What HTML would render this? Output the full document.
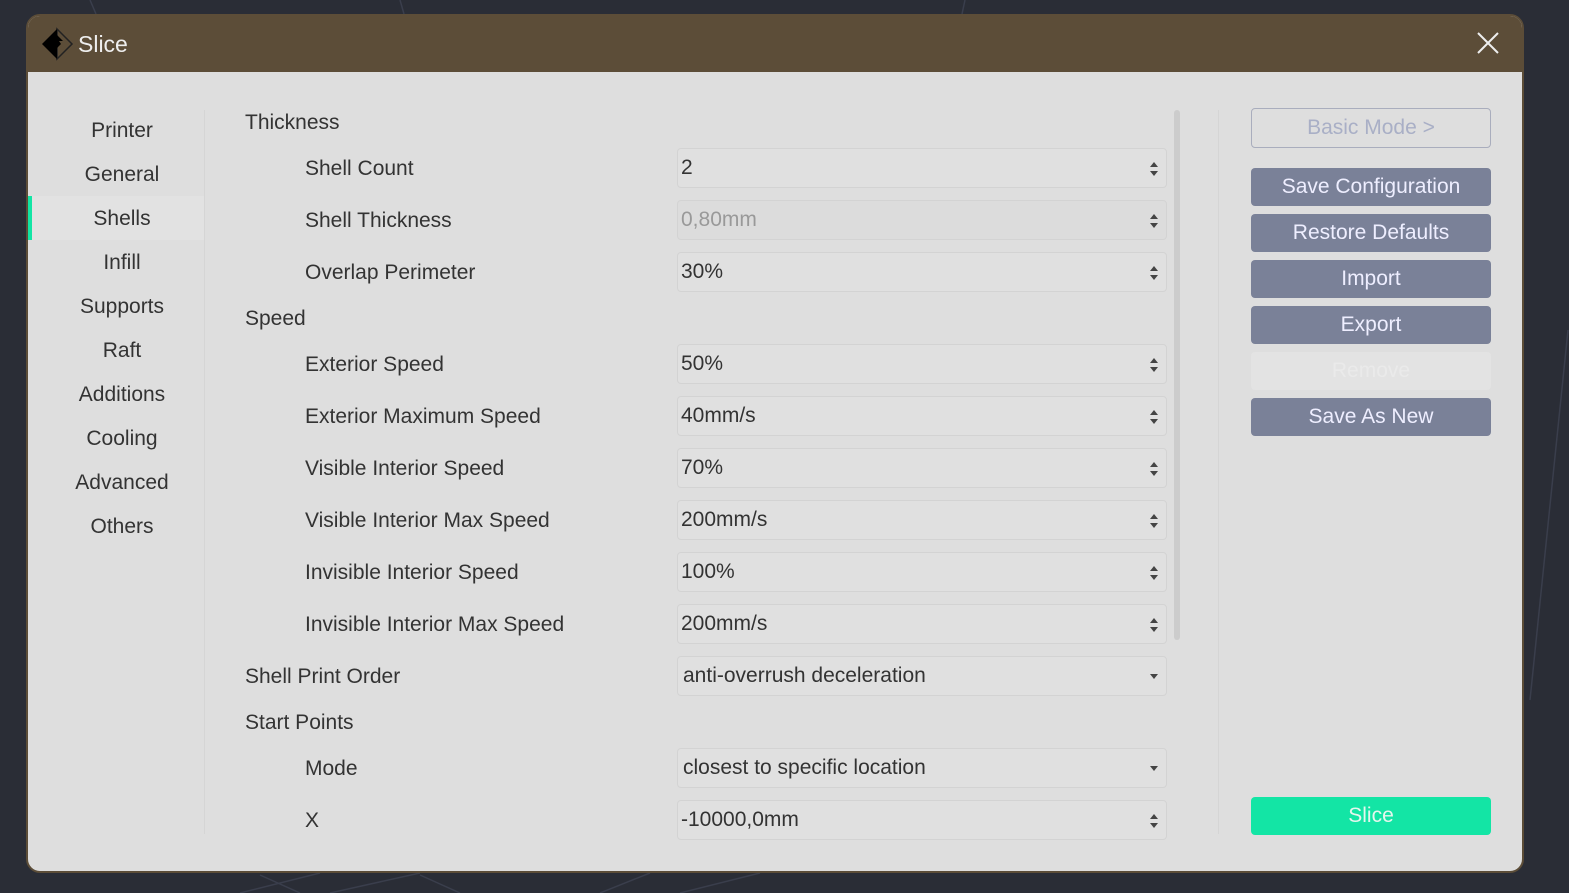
<!DOCTYPE html>
<html><head><meta charset="utf-8"><style>
*{margin:0;padding:0;box-sizing:border-box}
body{width:1569px;height:893px;background:#2a2d36;position:relative;overflow:hidden;font-family:"Liberation Sans",sans-serif;color:#333}
.dlg{position:absolute;left:26px;top:14px;width:1498px;height:859px;background:#dedede;border:2px solid #5c4d38;border-radius:14px;overflow:hidden}
.hdr{position:absolute;left:0;top:0;width:100%;height:56px;background:#5c4d38}
.ttl{position:absolute;left:50px;top:16px;font-size:23px;color:#eee}
.a{position:absolute;font-size:21px;white-space:nowrap;line-height:1}
.nav{position:absolute;left:0;width:188px;text-align:center;font-size:21px}
.inp{position:absolute;left:649px;width:490px;height:40px;border:1px solid #d3d3d3;border-radius:4px;background:#e0e0e0;font-size:21px;padding-left:3px;line-height:38px}
.sp{position:absolute;right:8px;top:12px;width:8px;height:16px}
.btn{position:absolute;left:1223px;width:240px;height:38px;border-radius:4px;background:#7a8198;color:#eef;font-size:21px;text-align:center;line-height:38px}
</style></head><body>
<svg style="position:absolute;left:0;top:0" width="1569" height="893"><g stroke="#3a3e4c" stroke-width="1.5" fill="none"><line x1="90" y1="0" x2="96" y2="14"/><line x1="400" y1="0" x2="404" y2="14"/><line x1="965" y1="0" x2="962" y2="14"/><line x1="1568" y1="330" x2="1530" y2="700"/><line x1="240" y1="893" x2="320" y2="873"/><line x1="330" y1="893" x2="420" y2="873"/><line x1="600" y1="893" x2="650" y2="873"/><line x1="680" y1="893" x2="760" y2="873"/><line x1="260" y1="875" x2="300" y2="893"/><line x1="420" y1="875" x2="460" y2="893"/></g></svg>
<div class="dlg">
<div class="hdr">
<svg style="position:absolute;left:12px;top:11px" width="34" height="34"><path d="M17 2 L32 17 L17 32 Z" fill="none" stroke="#222" stroke-width="1.5"/><path d="M17 2 L2 17 L17 32 Z" fill="#000"/><path d="M17 8 L23 14 L19 14 L21 17 L17 21 L17 27 L12 22 L14 19 L12 17 Z" fill="#000"/></svg>
<div class="ttl" style="top:15px">Slice</div>
<svg style="position:absolute;right:22px;top:15px" width="24" height="24"><path d="M2 2L22 22M22 2L2 22" stroke="#eee" stroke-width="2"/></svg>
</div>
<div style="position:absolute;left:0;top:180px;width:176px;height:44px;background:#e2e2e2"></div>
<div style="position:absolute;left:0;top:180px;width:4px;height:44px;background:#13e5a5"></div>
<div style="position:absolute;left:176px;top:94px;width:1px;height:724px;background:#d5d5d5"></div>
<div style="position:absolute;left:1190px;top:94px;width:1px;height:724px;background:#d5d5d5"></div>
<div style="position:absolute;left:1146px;top:94px;width:6px;height:530px;background:#ccc;border-radius:3px"></div>
<div class="nav" style="top:103px">Printer</div>
<div class="nav" style="top:147px">General</div>
<div class="nav" style="top:191px">Shells</div>
<div class="nav" style="top:235px">Infill</div>
<div class="nav" style="top:279px">Supports</div>
<div class="nav" style="top:323px">Raft</div>
<div class="nav" style="top:367px">Additions</div>
<div class="nav" style="top:411px">Cooling</div>
<div class="nav" style="top:455px">Advanced</div>
<div class="nav" style="top:499px">Others</div>

<div class="a" style="left:217px;top:96px">Thickness</div>
<div class="a" style="left:277px;top:142px">Shell Count</div>
<div class="a" style="left:277px;top:194px">Shell Thickness</div>
<div class="a" style="left:277px;top:246px">Overlap Perimeter</div>
<div class="a" style="left:217px;top:292px">Speed</div>
<div class="a" style="left:277px;top:338px">Exterior Speed</div>
<div class="a" style="left:277px;top:390px">Exterior Maximum Speed</div>
<div class="a" style="left:277px;top:442px">Visible Interior Speed</div>
<div class="a" style="left:277px;top:494px">Visible Interior Max Speed</div>
<div class="a" style="left:277px;top:546px">Invisible Interior Speed</div>
<div class="a" style="left:277px;top:598px">Invisible Interior Max Speed</div>
<div class="a" style="left:217px;top:650px">Shell Print Order</div>
<div class="a" style="left:217px;top:696px">Start Points</div>
<div class="a" style="left:277px;top:742px">Mode</div>
<div class="a" style="left:277px;top:794px">X</div>

<div class="inp" style="top:132px">2<svg class="sp"><path d="M0 6L4 1L8 6ZM0 10L8 10L4 15Z" fill="#444"/></svg></div>
<div class="inp" style="top:184px;color:#999;background:#dcdcdc">0,80mm<svg class="sp"><path d="M0 6L4 1L8 6ZM0 10L8 10L4 15Z" fill="#444"/></svg></div>
<div class="inp" style="top:236px">30%<svg class="sp"><path d="M0 6L4 1L8 6ZM0 10L8 10L4 15Z" fill="#444"/></svg></div>
<div class="inp" style="top:328px">50%<svg class="sp"><path d="M0 6L4 1L8 6ZM0 10L8 10L4 15Z" fill="#444"/></svg></div>
<div class="inp" style="top:380px">40mm/s<svg class="sp"><path d="M0 6L4 1L8 6ZM0 10L8 10L4 15Z" fill="#444"/></svg></div>
<div class="inp" style="top:432px">70%<svg class="sp"><path d="M0 6L4 1L8 6ZM0 10L8 10L4 15Z" fill="#444"/></svg></div>
<div class="inp" style="top:484px">200mm/s<svg class="sp"><path d="M0 6L4 1L8 6ZM0 10L8 10L4 15Z" fill="#444"/></svg></div>
<div class="inp" style="top:536px">100%<svg class="sp"><path d="M0 6L4 1L8 6ZM0 10L8 10L4 15Z" fill="#444"/></svg></div>
<div class="inp" style="top:588px">200mm/s<svg class="sp"><path d="M0 6L4 1L8 6ZM0 10L8 10L4 15Z" fill="#444"/></svg></div>
<div class="inp" style="top:640px;padding-left:5px">anti-overrush deceleration<svg class="sp"><path d="M0 5L8 5L4 10Z" fill="#444"/></svg></div>
<div class="inp" style="top:732px;padding-left:5px">closest to specific location<svg class="sp"><path d="M0 5L8 5L4 10Z" fill="#444"/></svg></div>
<div class="inp" style="top:784px">-10000,0mm<svg class="sp"><path d="M0 6L4 1L8 6ZM0 10L8 10L4 15Z" fill="#444"/></svg></div>

<div class="btn" style="top:92px;height:40px;background:transparent;border:1px solid #a9adbd;color:#a9afc6">Basic Mode &gt;</div>
<div class="btn" style="top:152px">Save Configuration</div>
<div class="btn" style="top:198px">Restore Defaults</div>
<div class="btn" style="top:244px">Import</div>
<div class="btn" style="top:290px">Export</div>
<div class="btn" style="top:336px;background:#e3e3e3;color:#eaeaea">Remove</div>
<div class="btn" style="top:382px">Save As New</div>
<div class="btn" style="top:781px;background:#13e5a5;color:#e6f6ee">Slice</div>
</div>
</body></html>
